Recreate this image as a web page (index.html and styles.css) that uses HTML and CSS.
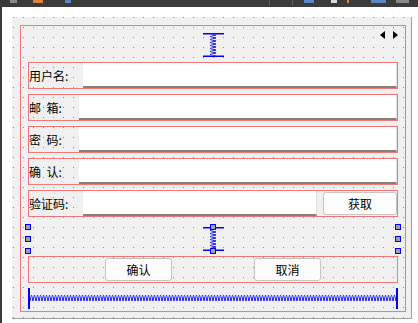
FILE: index.html
```html
<!DOCTYPE html>
<html lang="zh-CN">
  <head>
    <meta charset="UTF-8" />
    <title>注册窗体</title>
    <link rel="stylesheet" href="styles.css">
  </head>
  <body>
    <div class="toolbar">
      <span class="tb tb-gray" style="margin-left: 10px; width: 7px"></span>
      <span class="tb tb-orange" style="margin-left: 16px; width: 10px"></span>
      <span class="tb tb-blue" style="margin-left: 22px; width: 6px"></span>
      <span class="tb tb-sep" style="margin-left: 198px"></span>
      <span class="tb tb-sep" style="margin-left: 22px"></span>
      <span class="tb tb-blue" style="margin-left: 11px; width: 10px"></span>
      <span class="tb tb-white" style="margin-left: 17px; width: 6px"></span>
      <span class="tb tb-orange" style="margin-left: 10px; width: 2px"></span>
      <span class="tb tb-blue" style="margin-left: 22px; width: 15px"></span>
      <span class="tb tb-gray" style="margin-left: 10px; width: 13px"></span>
    </div>

    <div class="workspace">
      <div class="form">
        <div class="tab-arrows">
          <span class="arrow-left"></span>
          <span class="arrow-right"></span>
        </div>

        <div class="main-layout">
          <div class="spacer-top">
            <svg class="vspring" width="21" height="24" viewBox="0 0 21 24">
              <defs>
                <pattern id="coilTop" width="21" height="3" patternUnits="userSpaceOnUse">
                  <path d="M7 0.5 L13 2 L7 3.5" fill="none" stroke="#0000ff" stroke-width="0.9" />
                </pattern>
              </defs>
              <rect x="0" y="0" width="21" height="1.5" fill="#0000ff" />
              <rect x="0" y="1.5" width="21" height="21" fill="url(#coilTop)" />
              <rect x="0" y="22.5" width="21" height="1.5" fill="#0000ff" />
            </svg>
          </div>

          <div class="row">
            <label class="field-label wide">用户名:</label>
            <div class="line-edit"></div>
          </div>
          <div class="row">
            <label class="field-label">邮&nbsp;&nbsp;箱:</label>
            <div class="line-edit"></div>
          </div>
          <div class="row">
            <label class="field-label">密&nbsp;&nbsp;码:</label>
            <div class="line-edit"></div>
          </div>
          <div class="row">
            <label class="field-label">确&nbsp;&nbsp;认:</label>
            <div class="line-edit"></div>
          </div>
          <div class="row">
            <label class="field-label wide">验证码:</label>
            <div class="line-edit"></div>
            <button class="push-button code-button">获取</button>
          </div>

          <div class="spacer-middle">
            <div class="selected-spacer">
              <svg class="vspring" width="21" height="24" viewBox="0 0 21 24">
                <defs>
                  <pattern id="coilMid" width="21" height="3" patternUnits="userSpaceOnUse">
                    <path d="M7 0.5 L13 2 L7 3.5" fill="none" stroke="#0000ff" stroke-width="0.9" />
                  </pattern>
                </defs>
                <rect x="0" y="0" width="21" height="1.5" fill="#0000ff" />
                <rect x="0" y="1.5" width="21" height="21" fill="url(#coilMid)" />
                <rect x="0" y="22.5" width="21" height="1.5" fill="#0000ff" />
              </svg>
              <span class="handle h-tl"></span>
              <span class="handle h-ml"></span>
              <span class="handle h-bl"></span>
              <span class="handle h-tr"></span>
              <span class="handle h-mr"></span>
              <span class="handle h-br"></span>
              <span class="handle h-tc"></span>
              <span class="handle h-bc"></span>
            </div>
          </div>

          <div class="row button-row">
            <button class="push-button">确认</button>
            <button class="push-button">取消</button>
          </div>

          <div class="spacer-bottom">
            <svg class="hspring" width="370" height="21" viewBox="0 0 370 21">
              <defs>
                <pattern id="coilH" width="3" height="21" patternUnits="userSpaceOnUse">
                  <path d="M0.5 7 L2 13 L3.5 7" fill="none" stroke="#0000ff" stroke-width="0.9" />
                </pattern>
              </defs>
              <rect x="0" y="0" width="2" height="21" fill="#0000ff" />
              <rect x="2" y="6" width="366" height="8" fill="url(#coilH)" />
              <rect x="368" y="0" width="2" height="21" fill="#0000ff" />
            </svg>
          </div>
        </div>
      </div>
    </div>
  </body>
</html>
```

FILE: styles.css
```css
body {
  margin: 0;
  background-color: #ffffff;
  font-family: "Noto Sans CJK SC", "Noto Sans", sans-serif;
  font-size: 12px;
  color: #000;
}
.toolbar {
  height: 7px;
  background-color: #3b3b3b;
  display: flex;
  align-items: flex-start;
}
.tb {
  height: 3px;
  flex: none;
}
.tb-gray {
  background-color: #8a8a8a;
}
.tb-orange {
  background-color: #d8873a;
}
.tb-blue {
  background-color: #5b86c4;
}
.tb-white {
  background-color: #dcdcdc;
}
.tb-sep {
  width: 1px;
  height: 6px;
  background-color: #5a5a5a;
}
.workspace {
  border-left: 2px solid #3b3b3b;
  padding: 10px 0 0 10px;
  height: 316px;
  box-sizing: border-box;
}
.form {
  position: relative;
  width: 400px;
  height: 302px;
  box-sizing: border-box;
  padding: 8px 0 0 8px;
  border-right: 1px solid #a0a0a0;
  border-bottom: 1px solid #a0a0a0;
  background-color: #f0f0f0;
  background-image: conic-gradient(from 270deg at 1px 1px, #8c8c8c 25%, transparent 0);
  background-size: 10px 10px;
  background-position: 1px 0;
}
.tab-arrows {
  position: absolute;
  left: 368px;
  top: 14px;
  display: flex;
  gap: 8px;
}
.arrow-left {
  width: 0;
  height: 0;
  border-top: 4px solid transparent;
  border-bottom: 4px solid transparent;
  border-right: 5px solid #000;
}
.arrow-right {
  width: 0;
  height: 0;
  border-top: 4px solid transparent;
  border-bottom: 4px solid transparent;
  border-left: 5px solid #000;
}
.main-layout {
  width: 386px;
  height: 287px;
  box-sizing: border-box;
  border: 1px solid #f07878;
  padding: 0 7px;
  display: flex;
  flex-direction: column;
  gap: 5px;
}
.spacer-top {
  height: 36px;
  margin-bottom: -5px;
  flex: none;
  display: flex;
  justify-content: center;
  align-items: flex-start;
  padding-top: 7px;
  box-sizing: border-box;
}
.vspring {
  display: block;
}
.row {
  height: 27px;
  flex: none;
  box-sizing: border-box;
  border: 1px solid #f07878;
  display: flex;
  align-items: stretch;
}
.field-label {
  width: 50px;
  flex: none;
  display: flex;
  align-items: center;
  white-space: pre;
  line-height: 1;
}
.field-label.wide {
  width: 54px;
}
.line-edit {
  flex: 1;
  background-color: #ffffff;
  border-bottom: 2px solid #828282;
  border-right: 1px solid #e2e2e2;
}
.push-button {
  height: 23px;
  margin-top: 1px;
  box-sizing: border-box;
  border: 1px solid #c6c6c6;
  border-radius: 3px;
  background-color: #fdfdfd;
  font-family: "Noto Sans CJK SC", "Noto Sans", sans-serif;
  font-size: 12px;
  color: #000;
  padding: 0;
  line-height: 1;
}
.code-button {
  width: 74px;
  margin-left: 6px;
}
.spacer-middle {
  height: 34px;
  flex: none;
  margin-bottom: -5px;
  padding-top: 5px;
  box-sizing: border-box;
}
.selected-spacer {
  position: relative;
  height: 24px;
  display: flex;
  justify-content: center;
}
.handle {
  position: absolute;
  width: 6px;
  height: 6px;
  box-sizing: border-box;
  border: 1px solid #0000ff;
  background-color: #a0a0a4;
}
.h-tl {
  left: -3px;
  top: -3px;
}
.h-ml {
  left: -3px;
  top: 9px;
}
.h-bl {
  left: -3px;
  bottom: -3px;
}
.h-tr {
  right: -3px;
  top: -3px;
}
.h-mr {
  right: -3px;
  top: 9px;
}
.h-br {
  right: -3px;
  bottom: -3px;
}
.h-tc {
  left: 182px;
  top: -3px;
}
.h-bc {
  left: 182px;
  bottom: -3px;
}
.button-row {
  justify-content: center;
  align-items: flex-start;
  gap: 82px;
}
.button-row .push-button {
  width: 67px;
}
.spacer-bottom {
  height: 33px;
  flex: none;
  margin-top: -5px;
  padding-top: 5px;
  box-sizing: border-box;
}
.hspring {
  display: block;
}
```
